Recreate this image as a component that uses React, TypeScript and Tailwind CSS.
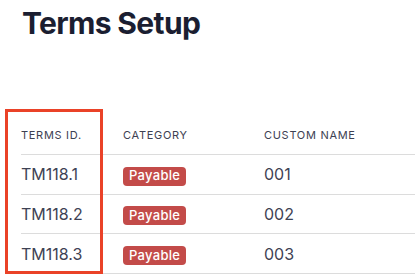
import React from "react";

const rows = [
  { id: "TM118.1", cat: "Payable", name: "001" },
  { id: "TM118.2", cat: "Payable", name: "002" },
  { id: "TM118.3", cat: "Payable", name: "003" },
];

export default function App() {
  return (
    <div
      className="relative w-[415px] h-[276px] overflow-hidden bg-white"
      style={{ fontFamily: "Inter, 'Noto Sans', sans-serif" }}
    >
      <div className="pt-[5px] pl-[22px]">
        <h1 className="text-[30px] leading-[36px] font-bold text-[#1b1e31] tracking-[-0.65px]">
          Terms Setup
        </h1>
      </div>
      <div className="mt-[86px] ml-[21px]">
        <div className="flex border-b border-[#dcdcdc] pb-[11px] text-[11px] leading-[16px] uppercase tracking-[0.7px] text-[#3d4152]">
          <div className="w-[102px]">Terms ID.</div>
          <div className="w-[141px]">Category</div>
          <div className="flex-1">Custom Name</div>
        </div>
        {rows.map((r) => (
          <div
            key={r.id}
            className="flex items-center h-[39.67px] border-b border-[#dcdcdc] text-[16px] text-[#3e4254]"
          >
            <div className="w-[102px]">{r.id}</div>
            <div className="w-[141px]">
              <span className="inline-flex items-center h-[19px] px-[6px] rounded-[4px] bg-[#c34b49] text-white text-[13px] font-medium tracking-[0.3px]">
                {r.cat}
              </span>
            </div>
            <div className="flex-1">{r.name}</div>
          </div>
        ))}
      </div>
      <div className="absolute left-[5px] top-[109px] w-[98px] h-[165px] border-[3px] border-[#ea4228]" />
    </div>
  );
}
